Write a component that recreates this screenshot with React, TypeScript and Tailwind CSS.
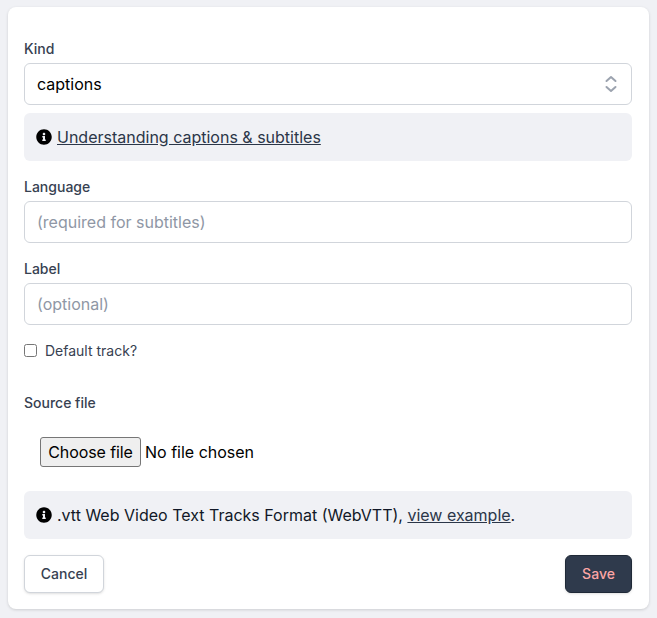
import React from "react"

function InfoIcon() {
  return (
    <svg viewBox="0 0 512 512" className="w-4 h-4 flex-shrink-0 fill-black">
      <path d="M256 8C119 8 8 119 8 256s111 248 248 248 248-111 248-248S393 8 256 8zm0 110c23.2 0 42 18.800 42 42s-18.800 42-42 42-42-18.800-42-42 18.800-42 42-42zm56 254c0 6.600-5.400 12-12 12h-88c-6.600 0-12-5.400-12-12v-24c0-6.600 5.400-12 12-12h12v-64h-12c-6.600 0-12-5.400-12-12v-24c0-6.600 5.400-12 12-12h64c6.600 0 12 5.400 12 12v100h12c6.600 0 12 5.400 12 12v24z" />
    </svg>
  )
}

function Label({ children }: { children: React.ReactNode }) {
  return <label className="block text-sm leading-5 font-medium text-[#374151]">{children}</label>
}

const inputClass =
  "mt-1 block w-full h-[42px] px-3 text-base rounded-md border border-[#d1d5db] bg-white text-black placeholder:text-[#8f97a5] outline-none"

export default function App() {
  return (
    <div className="min-h-[618px] bg-[#f0f1f5] pl-2 pr-[8px] pt-[7px] font-['Inter',sans-serif]">
      <form className="bg-white rounded-lg shadow-[0_1px_3px_rgba(0,0,0,0.15)] h-[602px] pl-4 pr-[17px] pt-8 pb-4">
        <Label>Kind</Label>
        <div className="relative">
          <select className={`${inputClass} appearance-none`} defaultValue="captions">
            <option>captions</option>
            <option>subtitles</option>
          </select>
          <svg
            viewBox="0 0 20 20"
            fill="none"
            stroke="#9ca3af"
            strokeWidth="2"
            strokeLinecap="round"
            strokeLinejoin="round"
            className="absolute right-[11px] top-[11px] w-5 h-5"
          >
            <path d="M5.500 7 10 3l4.500 4M5.500 13l4.500 4 4.500-4" />
          </svg>
        </div>
        <div className="mt-2 h-12 px-3 flex items-center gap-[5px] rounded-md bg-[#f0f1f5] text-base text-[#1f2937]">
          <InfoIcon />
          <a href="#" className="underline text-[#2b3648]">Understanding captions &amp; subtitles</a>
        </div>

        <div className="mt-4">
          <Label>Language</Label>
          <input className={inputClass} placeholder="(required for subtitles)" />
        </div>
        <div className="mt-4">
          <Label>Label</Label>
          <input className={inputClass} placeholder="(optional)" />
        </div>
        <div className="mt-4 h-5 flex items-center gap-2">
          <input type="checkbox" className="w-[13px] h-[13px] m-0 -mt-0.5" />
          <span className="text-sm text-[#374151]">Default track?</span>
        </div>

        <div className="mt-8">
          <Label>Source file</Label>
          <div className="mt-6 pl-4 h-[30px] flex items-center gap-1 text-base text-black">
            <button type="button" className="w-[101px] h-[30px] bg-[#efefef] border border-[#767676] rounded-[3px] tracking-[-0.1px]">
              Choose file
            </button>
            <span>No file chosen</span>
          </div>
        </div>

        <div className="mt-6 h-12 px-3 flex items-center gap-[5px] rounded-md bg-[#f0f1f5] text-base text-[#111827]">
          <InfoIcon />
          <span>
            .vtt Web Video Text Tracks Format (WebVTT), <a href="#" className="underline text-[#2b3648]">view example</a>.
          </span>
        </div>

        <div className="mt-4 flex justify-between">
          <button type="button" className="h-[38px] w-20 rounded-md border border-[#d1d5db] bg-white text-sm font-medium text-[#374151] shadow-sm">
            Cancel
          </button>
          <button type="button" className="h-[38px] w-[67px] rounded-md border border-[#1f2937] bg-[#2f3a4c] text-sm font-medium text-[#fca5a5] shadow-sm">
            Save
          </button>
        </div>
      </form>
    </div>
  )
}
